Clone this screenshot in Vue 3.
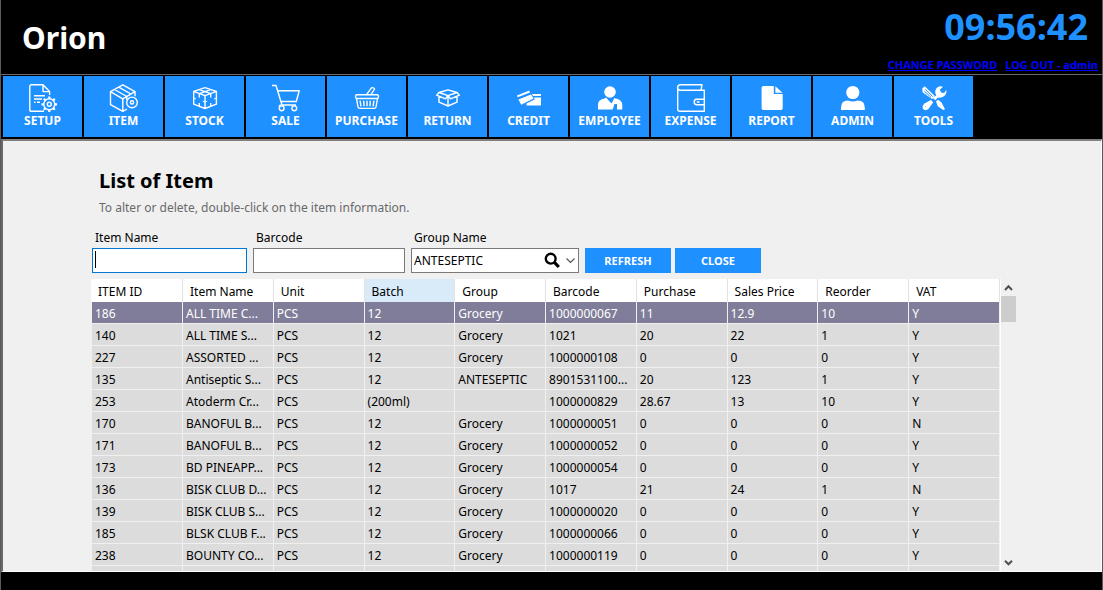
<script setup>
import { ref } from 'vue'

const tools = [
  { id: 'setup', label: 'SETUP' },
  { id: 'item', label: 'ITEM' },
  { id: 'stock', label: 'STOCK' },
  { id: 'sale', label: 'SALE' },
  { id: 'purchase', label: 'PURCHASE' },
  { id: 'return', label: 'RETURN' },
  { id: 'credit', label: 'CREDIT' },
  { id: 'employee', label: 'EMPLOYEE' },
  { id: 'expense', label: 'EXPENSE' },
  { id: 'report', label: 'REPORT' },
  { id: 'admin', label: 'ADMIN' },
  { id: 'tools', label: 'TOOLS' }
]

const columns = ['ITEM ID', 'Item Name', 'Unit', 'Batch', 'Group', 'Barcode', 'Purchase', 'Sales Price', 'Reorder', 'VAT']

const rows = [
  ['186', 'ALL TIME C...', 'PCS', '12', 'Grocery', '1000000067', '11', '12.9', '10', 'Y'],
  ['140', 'ALL TIME S...', 'PCS', '12', 'Grocery', '1021', '20', '22', '1', 'Y'],
  ['227', 'ASSORTED ...', 'PCS', '12', 'Grocery', '1000000108', '0', '0', '0', 'Y'],
  ['135', 'Antiseptic S...', 'PCS', '12', 'ANTESEPTIC', '8901531100...', '20', '123', '1', 'Y'],
  ['253', 'Atoderm Cr...', 'PCS', '(200ml)', '', '1000000829', '28.67', '13', '10', 'Y'],
  ['170', 'BANOFUL B...', 'PCS', '12', 'Grocery', '1000000051', '0', '0', '0', 'N'],
  ['171', 'BANOFUL B...', 'PCS', '12', 'Grocery', '1000000052', '0', '0', '0', 'Y'],
  ['173', 'BD PINEAPP...', 'PCS', '12', 'Grocery', '1000000054', '0', '0', '0', 'Y'],
  ['136', 'BISK CLUB D...', 'PCS', '12', 'Grocery', '1017', '21', '24', '1', 'N'],
  ['139', 'BISK CLUB S...', 'PCS', '12', 'Grocery', '1000000020', '0', '0', '0', 'Y'],
  ['185', 'BLSK CLUB F...', 'PCS', '12', 'Grocery', '1000000066', '0', '0', '0', 'Y'],
  ['238', 'BOUNTY CO...', 'PCS', '12', 'Grocery', '1000000119', '0', '0', '0', 'Y'],
  ['', '', '', '', '', '', '', '', '', '']
]

const selected = ref(0)
const itemName = ref('')
const barcode = ref('')
const group = ref('ANTESEPTIC')
</script>

<template>
  <div class="window">
    <header class="top">
      <h1 class="brand">Orion</h1>
      <div class="session">
        <div class="clock">09:56:42</div>
        <div class="links">
          <a href="#password">CHANGE PASSWORD</a>
          <a href="#logout">LOG OUT - admin</a>
        </div>
      </div>
    </header>

    <nav class="toolbar">
      <button v-for="t in tools" :key="t.id" type="button" class="tool">
        <svg class="icon" viewBox="0 0 31 31" aria-hidden="true">
          <template v-if="t.id === 'setup'">
            <path d="M17 29.3H4.3Q2.8 29.3 2.8 27.8V4.3Q2.8 2.8 4.3 2.8H16L22.6 9.6V13M16 2.8V9.6H22.6M7 13.8H18M7 17H15M7 20.2H8.5M10 20.2H13" />
            <circle cx="22.3" cy="22.3" r="5.5" />
            <circle cx="22.3" cy="22.3" r="2" />
            <path class="teeth" d="M22.3 16.8V14.5M22.3 27.8V30.1M16.8 22.3H14.5M27.8 22.3H30.1M18.4 18.4L16.8 16.8M26.2 18.4L27.8 16.8M18.4 26.2L16.8 27.8M26.2 26.2L27.8 27.8" />
          </template>
          <template v-else-if="t.id === 'item'">
            <path d="M19 27L14.8 29.3L2.5 22.7V9.7L14.8 2.8L27 9.7V14.3M2.5 9.7L14.8 16.8L27 9.7M14.8 16.8V29.3M6.5 7.5L18.8 14.5V18M10.7 5.2L23 12" />
            <circle cx="24" cy="20.4" r="5.3" />
            <circle cx="24" cy="20.4" r="1.6" />
          </template>
          <template v-else-if="t.id === 'stock'">
            <path d="M16 5.7L27.4 9.4V22.2L16 26.5L4.7 22.2V9.4ZM4.7 9.4L16 13.7L27.4 9.4M16 13.7V26.5M10.3 7.6L21.7 11.6M21.7 7.6L10.3 11.6M10.3 11.8V15.5M21.7 11.8V15.5M10.3 21V24.2M21.7 21V24.2" />
            <path class="thin" d="M4.7 16L7 17M25 17L27.4 16M13.8 19.2L16 20L18.2 19.2" />
          </template>
          <template v-else-if="t.id === 'sale'">
            <path d="M2 3.5H6L12 23M7.8 8.7H29.2L26.3 19.5H11M12 23H26M12 23Q9 22.5 9.4 25" />
            <circle cx="11.7" cy="26.3" r="2.4" />
            <circle cx="24.3" cy="26.3" r="2.4" />
          </template>
          <template v-else-if="t.id === 'purchase'">
            <path d="M4.6 14Q4.6 12.7 6 12.7H26Q27.4 12.7 27.4 14V15.2Q27.4 16.5 26 16.5H6Q4.6 16.5 4.6 15.2ZM5.5 16.5L7 25Q7.2 26.4 9 26.4H23Q24.8 26.4 25 25L26.5 16.5M9 18.7L10 24.3M12.7 18.7L13.1 24.3M19.3 18.7L18.9 24.3M23 18.7L22 24.3M16 18.7V24.3M15.5 12.7L20.5 5.8Q22.7 5.2 23.6 7L20 12.7" />
          </template>
          <template v-else-if="t.id === 'return'">
            <path d="M7 10.5L16 7.8L25 10.5L16 13.7ZM7 10.5L4.6 13.2L13.5 16.8L16 13.7L18.5 16.8L27.4 13.2L25 10.5M7 14.5V20.2L16 24L25 20.2V14.5M16 14V24" />
          </template>
          <g v-else-if="t.id === 'credit'" class="solid">
            <path d="M4 13.6L16.2 8.6L17 10.4L4.7 15.2Z" />
            <path d="M5.5 17.6L18 12.4L20.6 16.5L8.2 22.8Z" />
            <path d="M18.8 12H28V14H20.2Z" />
            <path d="M20.5 15.5H28V23.4H13.5V21.5L22 17.3Z" />
          </g>
          <g v-else-if="t.id === 'employee'" class="solid">
            <circle cx="16" cy="10" r="5.8" />
            <path d="M4 27.6V23Q4 17.7 9.8 16.8L12 15.8L17.5 21.5L20.5 16.3Q28.3 17.5 28.3 23V27.6H23V22H20.5L18.7 27.6Z" />
            <path class="thin" d="M12 15.8L15.5 23L17.5 21.5M20.5 16.3L19.5 22" />
          </g>
          <template v-else-if="t.id === 'expense'">
            <path d="M2.7 5.5V27Q2.7 29.3 5 29.3H29.3V8.3H5.3Q2.7 8 2.7 5.5Q2.7 2.7 5.5 2.7H27L26 8.3M29.3 17.3H21.5Q19.2 17.6 19.2 20Q19.2 22.5 21.5 22.7H29.3M21.8 20H24.5" />
          </template>
          <g v-else-if="t.id === 'report'" class="solid">
            <path d="M7.5 4H17.8V12H26.7V26.3Q26.7 28 25 28H7.3Q5.6 28 5.6 26.3V5.8Q5.6 4 7.5 4Z" />
            <path d="M19.4 4.2L26.5 10.7H19.4Z" />
          </g>
          <g v-else-if="t.id === 'admin'" class="solid">
            <circle cx="15.8" cy="10.5" r="6.6" />
            <path d="M4 28V25.5Q4 18.4 11 18.4Q15.8 20.7 20.7 18.4Q27.8 18.4 27.8 25.5V28Z" />
          </g>
          <g v-else class="solid">
            <path d="M4.3 6.3L6.8 4.2L16.8 14L14 17L4.5 10.2Z" />
            <path d="M18 19.5L20 17.8L23.5 20.5L27 27.2L25.3 28L19.8 24.2Z" />
            <path d="M18.2 13.5Q15.6 8.6 19.5 5.3Q22 3.5 25 4.7L21.8 7.8L23.2 10.5L26 11L28.3 8Q29 12 26 14.3Q23.2 16.2 20 15.5L17.2 18.2L14.6 15.8Z" />
            <path d="M12.8 18L15.2 20.3L10.8 26.5Q7.7 30 5 26.8Q3.5 23.7 7 21.2Z" />
            <path class="cut" d="M7.3 7.2L14.7 14.5M6.3 9L13 15.3M7.6 24.7L8.1 25.1" />
          </g>
        </svg>
        <span class="tool-label">{{ t.label }}</span>
      </button>
    </nav>

    <main class="panel">
      <h2 class="title">List of Item</h2>
      <p class="hint">To alter or delete, double-click on the item information.</p>

      <form class="filters" @submit.prevent>
        <div class="field name-field">
          <label for="item-name">Item Name</label>
          <div class="box">
            <input id="item-name" v-model="itemName" class="active" type="text" autocomplete="off" />
            <span class="caret"></span>
          </div>
        </div>
        <div class="field code-field">
          <label for="barcode">Barcode</label>
          <input id="barcode" v-model="barcode" type="text" autocomplete="off" />
        </div>
        <div class="field group-field">
          <label for="group">Group Name</label>
          <div class="box">
            <select id="group" v-model="group">
              <option>ANTESEPTIC</option>
              <option>Grocery</option>
            </select>
            <svg class="select-icons" viewBox="0 0 32 17" aria-hidden="true">
              <circle cx="6.7" cy="6.7" r="4.9" fill="none" stroke="#000" stroke-width="2.4" />
              <path d="M10.4 10.4L14.8 15" fill="none" stroke="#000" stroke-width="3.2" />
              <path d="M22.5 6.5L26.5 10.5L30.5 6.5" fill="none" stroke="#555" stroke-width="1.2" />
            </svg>
          </div>
        </div>
        <div class="actions">
          <button type="button">REFRESH</button>
          <button type="button">CLOSE</button>
        </div>
      </form>

      <div class="grid">
        <div class="sheet">
          <table>
            <thead>
              <tr>
                <th v-for="c in columns" :key="c" :class="{ hot: c === 'Batch' }" scope="col">{{ c }}</th>
              </tr>
            </thead>
            <tbody>
              <tr v-for="(r, i) in rows" :key="i" :class="{ selected: i === selected }" @click="selected = i">
                <td v-for="(v, j) in r" :key="j">{{ v }}</td>
              </tr>
            </tbody>
          </table>
        </div>
        <div class="scroll" aria-hidden="true">
          <svg class="arrow" viewBox="0 0 15 17"><path d="M4 11L7.5 7.3L11 11" /></svg>
          <div class="thumb"></div>
          <svg class="arrow last" viewBox="0 0 15 17"><path d="M4 6.8L7.5 10.3L11 6.8" /></svg>
        </div>
      </div>
    </main>

    <footer class="status"></footer>
  </div>
</template>

<style>
html,
body {
  margin: 0;
  background: #000;
}
</style>

<style scoped>
* {
  box-sizing: border-box;
}

.window {
  display: flex;
  flex-direction: column;
  height: 100vh;
  min-width: 980px;
  background: #000;
  border-left: 1px solid #5a5a5a;
  border-right: 1px solid #5a5a5a;
  font-family: "Noto Sans", "Open Sans", sans-serif;
  font-size: 12px;
  color: #000;
}

.top {
  display: flex;
  justify-content: space-between;
  height: 74px;
  padding-left: 21px;
  flex: none;
}

.brand {
  margin: 18px 0 0;
  font-size: 30px;
  line-height: 40px;
  font-weight: 700;
  color: #fff;
}

.session {
  display: flex;
  flex-direction: column;
  align-items: flex-end;
  padding: 3px 4px 0 0;
}

.clock {
  padding-right: 10px;
  font-size: 36px;
  line-height: 48px;
  font-weight: 700;
  color: #1e90ff;
}

.links {
  display: flex;
  gap: 8px;
  margin-top: 6px;
  font-size: 11px;
  line-height: 16px;
  font-weight: 700;
}

.links a {
  color: #0000ff;
  text-decoration: underline;
}

.toolbar {
  display: flex;
  gap: 2px;
  flex: none;
  height: 65px;
  padding: 1px 0 0 2px;
  border-top: 1px solid #6a6a6a;
}

.tool {
  display: flex;
  flex-direction: column;
  align-items: center;
  width: 79px;
  height: 61px;
  padding: 6px 0 0;
  border: 0;
  background: #1e90ff;
  color: #fff;
  font: inherit;
}

.icon {
  width: 31px;
  height: 31px;
  fill: none;
  stroke: #fff;
  stroke-width: 1.4;
  stroke-linejoin: round;
}

.icon .teeth {
  stroke-width: 2.2;
}

.icon .solid {
  fill: #fff;
  stroke: none;
}

.icon .thin {
  fill: none;
  stroke: #fff;
  stroke-width: 1;
}

.icon .cut {
  fill: none;
  stroke: #1e90ff;
  stroke-width: 1;
}

.tool-label {
  font-size: 12px;
  line-height: 16px;
  font-weight: 700;
}

.panel {
  display: flex;
  flex-direction: column;
  flex: 1;
  min-height: 0;
  padding: 27px 85px 0 88px;
  background: #f0f0f0;
  border: 2px solid #696969;
  border-top-color: #808080;
  border-right: 1px solid #fff;
  border-bottom: 1px solid #fff;
}

.title {
  margin: 0 0 0 8px;
  font-size: 20px;
  line-height: 26px;
  font-weight: 700;
}

.hint {
  margin: 5px 0 0 8px;
  font-size: 12px;
  line-height: 18px;
  color: #696969;
}

.filters {
  display: flex;
  align-items: flex-end;
  gap: 6px;
  margin: 11px 0 6px 1px;
}

.field {
  display: flex;
  flex-direction: column;
}

.field label {
  margin-left: 3px;
  line-height: 20px;
}

.name-field {
  width: 155px;
}

.code-field {
  width: 152px;
}

.group-field {
  width: 168px;
}

.box {
  position: relative;
  display: flex;
}

.field input,
.field select {
  width: 100%;
  height: 25px;
  padding: 0 2px;
  border: 1px solid #7a7a7a;
  border-radius: 0;
  outline: 0;
  appearance: none;
  background: #fff;
  color: #000;
  font: inherit;
}

.field input.active {
  border-color: #0078d7;
}

.caret {
  position: absolute;
  left: 3px;
  top: 3px;
  width: 1px;
  height: 17px;
  background: #000;
}

.select-icons {
  position: absolute;
  right: 3px;
  top: 4px;
  width: 32px;
  height: 17px;
  pointer-events: none;
}

.actions {
  display: flex;
  gap: 4px;
}

.actions button {
  width: 86px;
  height: 25px;
  padding: 0;
  border: 0;
  background: #1e90ff;
  color: #fff;
  font: inherit;
  font-size: 11px;
  font-weight: 700;
}

.grid {
  display: flex;
  flex: 1;
  min-height: 0;
}

.sheet {
  flex: 1;
  min-width: 0;
  overflow: hidden;
  border-right: 1px solid #fff;
}

table {
  width: 100%;
  table-layout: fixed;
  border-collapse: separate;
  border-spacing: 0;
}

th,
td {
  overflow: hidden;
  white-space: nowrap;
  text-align: left;
  font-weight: 400;
  border-right: 1px solid #f0f0f0;
}

th {
  height: 23px;
  padding: 2px 0 0 7px;
  line-height: 21px;
  background: #fff;
  border-right-color: #e2e2e2;
}

th:first-child {
  width: 92px;
}

th.hot {
  background: #d9ebf9;
}

td {
  height: 22px;
  padding: 2px 0 0 3px;
  line-height: 19px;
  background: #dcdcdc;
  border-bottom: 1px solid #f0f0f0;
}

td:first-child {
  border-left: 1px solid #f0f0f0;
}

.selected td {
  background: #7f7d99;
  color: #fff;
}

.scroll {
  display: flex;
  flex-direction: column;
  width: 15px;
}

.arrow {
  width: 15px;
  height: 17px;
  fill: none;
  stroke: #505050;
  stroke-width: 2;
}

.arrow.last {
  margin-top: auto;
}

.thumb {
  height: 26px;
  background: #cdcdcd;
}

.status {
  flex: none;
  height: 18px;
  background: #000;
}
</style>
